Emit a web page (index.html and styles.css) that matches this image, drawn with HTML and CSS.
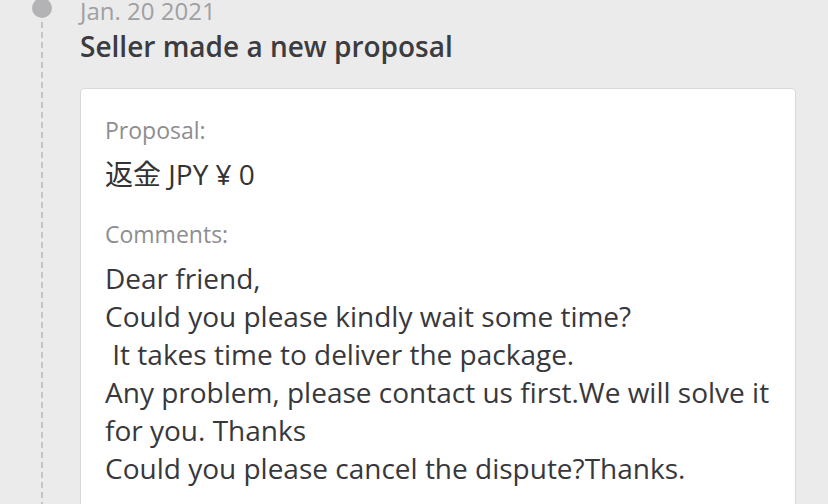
FILE: index.html
```html
<!DOCTYPE html>
<html lang="en">

<head>
    <meta charset="UTF-8">
    <meta name="viewport" content="width=device-width, initial-scale=1.0">
    <title>Dispute history</title>
    <link rel="stylesheet" href="styles.css">
</head>

<body>

    <div class="timeline">
        <div class="event">
            <div class="rail">
                <span class="dot"></span>
                <span class="line"></span>
            </div>

            <div class="event-body">
                <div class="date">Jan. 20 2021</div>
                <h2 class="title">Seller made a new proposal</h2>

                <div class="card">
                    <div class="label">Proposal:</div>
                    <div class="value">返金 JPY ¥ 0</div>

                    <div class="label">Comments:</div>
                    <div class="comment">Dear friend,<br>Could you please kindly wait some time?<br>&nbsp;It takes time to deliver the package.<br>Any problem, please contact us first.We will solve it for you. Thanks<br>Could you please cancel the dispute?Thanks.</div>
                </div>
            </div>
        </div>
    </div>

</body>

</html>
```

FILE: styles.css
```css
body {
    margin: 0;
    padding: 0;
    background-color: #ebebeb;
    font-family: 'Open Sans', 'Noto Sans CJK JP', sans-serif;
    color: #333;
    overflow: hidden;
}

.event {
    display: flex;
}

.rail {
    width: 80px;
    flex-shrink: 0;
    display: flex;
    flex-direction: column;
    align-items: center;
    padding-left: 4px;
    box-sizing: border-box;
}

.dot {
    width: 20px;
    height: 20px;
    border-radius: 50%;
    background-color: #b3b3b5;
    margin-top: -2px;
}

.line {
    flex: 1;
    width: 0;
    margin-top: 4px;
    border-left: 2px dashed #c4c4c6;
}

.event-body {
    width: 716px;
}

.date {
    font-size: 24px;
    line-height: 22px;
    color: #a0a0a2;
}

.title {
    margin: 5px 0 0;
    font-size: 28px;
    font-weight: 600;
    line-height: 38px;
    color: #3b3b40;
}

.card {
    margin-top: 23px;
    background-color: #fff;
    border: 1px solid #d9d9db;
    border-radius: 4px;
    padding: 25px 24px 40px;
}

.label {
    font-size: 23px;
    line-height: 32px;
    color: #8e8e90;
}

.value {
    font-size: 28px;
    line-height: 40px;
    color: #333;
    margin-top: 8px;
    margin-bottom: 24px;
}

.comment {
    font-size: 28px;
    line-height: 38px;
    color: #38383c;
    margin-top: 9px;
}
```
